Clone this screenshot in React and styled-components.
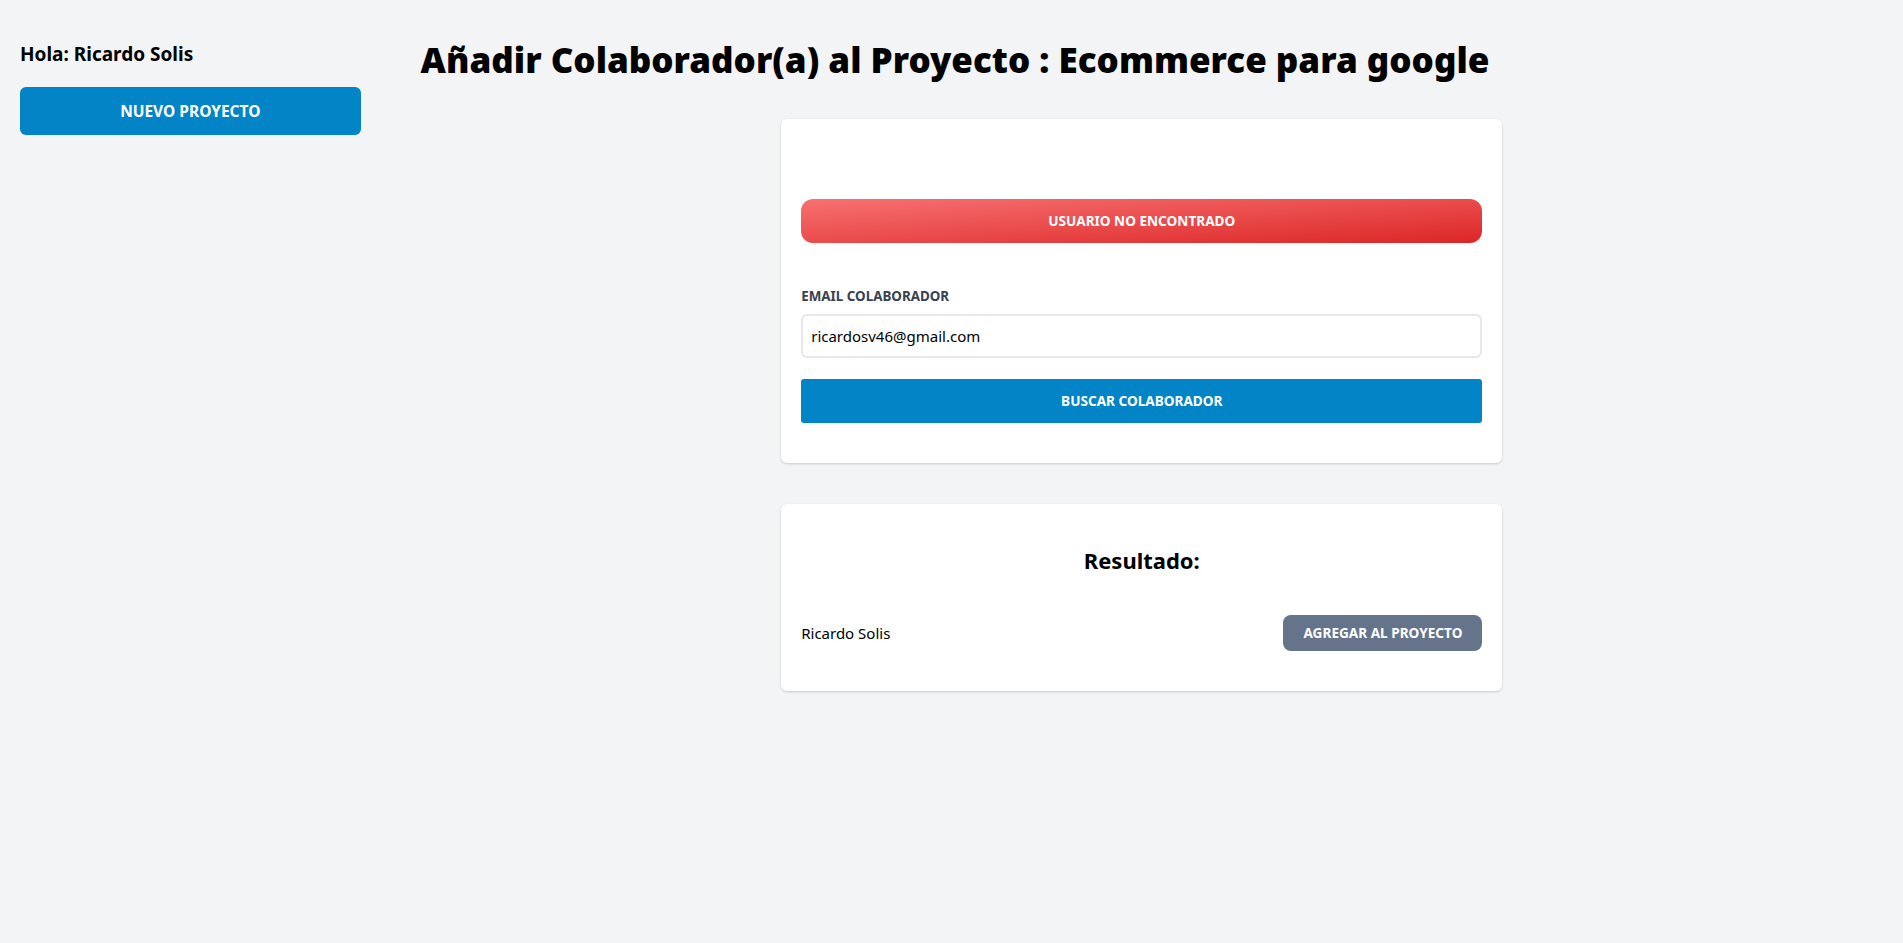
import React, { useState } from "react";
import styled, { createGlobalStyle } from "styled-components";

const GlobalStyle = createGlobalStyle`
  * { box-sizing: border-box; }
  html, body { margin: 0; padding: 0; }
  body {
    background: #f3f4f6;
    font-family: "Noto Sans", "Open Sans", Arial, sans-serif;
    color: #000;
  }
`;

const Layout = styled.div`
  display: flex;
  min-height: 943px;
  background: #f3f4f6;
`;

const Sidebar = styled.aside`
  width: 20%;
  padding: 40px 20px;
`;

const Greeting = styled.p`
  margin: 0;
  font-size: 19px;
  line-height: 28px;
  font-weight: 700;
`;

const NewProjectButton = styled.a`
  display: block;
  margin-top: 19px;
  padding: 12px;
  background: #0284c7;
  color: #fff;
  text-align: center;
  text-transform: uppercase;
  font-weight: 700;
  font-size: 15.5px;
  line-height: 24px;
  border-radius: 6px;
  cursor: pointer;
`;

const Main = styled.main`
  flex: 1;
  padding: 40px;
`;

const Title = styled.h1`
  margin: 0;
  font-size: 35px;
  line-height: 40px;
  font-weight: 900;
`;

const Card = styled.div`
  width: 50%;
  margin: ${(p) => (p.$first ? "39px" : "41px")} auto 0;
  background: #fff;
  border-radius: 6px;
  box-shadow: 0 1px 3px rgba(0, 0, 0, 0.12), 0 1px 2px rgba(0, 0, 0, 0.06);
  padding: 40px 20px;
`;

const Alert = styled.div`
  margin: 40px 0 43px;
  padding: 12px;
  border-radius: 12px;
  background: linear-gradient(to bottom right, #f87171, #dc2626);
  color: #fff;
  text-align: center;
  text-transform: uppercase;
  font-weight: 700;
  font-size: 13.6px;
  line-height: 20px;
`;

const Field = styled.div`
  margin-bottom: 21px;
`;

const Label = styled.label`
  display: block;
  color: #374151;
  text-transform: uppercase;
  font-weight: 700;
  font-size: 13.4px;
  line-height: 20px;
`;

const Input = styled.input`
  display: block;
  width: 100%;
  margin-top: 8px;
  padding: 8px;
  border: 2px solid #e5e7eb;
  border-radius: 6px;
  font-family: inherit;
  font-size: 15px;
  line-height: 24px;
  color: #000;
  outline: none;
`;

const SubmitButton = styled.button`
  display: block;
  width: 100%;
  padding: 12px;
  border: none;
  border-radius: 3px;
  background: #0284c7;
  color: #fff;
  text-transform: uppercase;
  font-family: inherit;
  font-weight: 700;
  font-size: 13.6px;
  line-height: 20px;
  cursor: pointer;
`;

const ResultTitle = styled.h2`
  margin: 0;
  text-align: center;
  font-size: 22px;
  line-height: 32px;
  font-weight: 700;
`;

const ResultRow = styled.div`
  margin-top: 39px;
  display: flex;
  justify-content: space-between;
  align-items: center;
`;

const Name = styled.p`
  margin: 0;
  font-size: 15px;
`;

const AddButton = styled.button`
  padding: 8px 20px;
  border: none;
  border-radius: 8px;
  background: #64748b;
  color: #fff;
  text-transform: uppercase;
  font-family: inherit;
  font-weight: 700;
  font-size: 13.6px;
  line-height: 20px;
  cursor: pointer;
`;

const App = () => {
  const [email, setEmail] = useState("ricardosv46@gmail.com");

  return (
    <>
      <GlobalStyle />
      <Layout>
        <Sidebar>
          <Greeting>Hola: Ricardo Solis</Greeting>
          <NewProjectButton>Nuevo Proyecto</NewProjectButton>
        </Sidebar>

        <Main>
          <Title>Añadir Colaborador(a) al Proyecto : Ecommerce para google</Title>

          <Card $first>
            <Alert>Usuario no encontrado</Alert>
            <Field>
              <Label htmlFor="email">Email Colaborador</Label>
              <Input
                id="email"
                type="email"
                value={email}
                onChange={(e) => setEmail(e.target.value)}
              />
            </Field>
            <SubmitButton>Buscar Colaborador</SubmitButton>
          </Card>

          <Card>
            <ResultTitle>Resultado:</ResultTitle>
            <ResultRow>
              <Name>Ricardo Solis</Name>
              <AddButton>Agregar al Proyecto</AddButton>
            </ResultRow>
          </Card>
        </Main>
      </Layout>
    </>
  );
};

export default App;
